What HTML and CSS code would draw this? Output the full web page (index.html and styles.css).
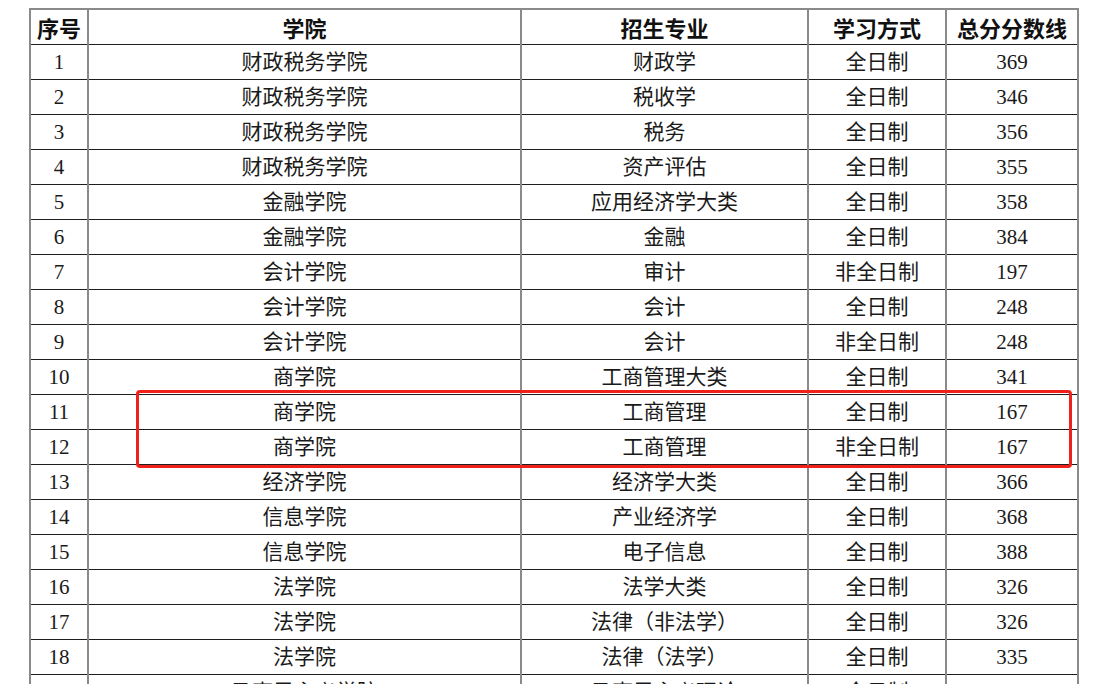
FILE: index.html
```html
<!DOCTYPE html>
<html lang="zh">
<head>
<meta charset="utf-8">
<link rel="stylesheet" href="styles.css">
</head>
<body>
<div class="wrap">
<table class="t">
<colgroup>
<col class="c1"><col class="c2"><col class="c3"><col class="c4"><col class="c5">
</colgroup>
<thead>
<tr><th>序号</th><th>学院</th><th>招生专业</th><th>学习方式</th><th>总分分数线</th></tr>
</thead>
<tbody>
<tr><td>1</td><td>财政税务学院</td><td>财政学</td><td>全日制</td><td>369</td></tr>
<tr><td>2</td><td>财政税务学院</td><td>税收学</td><td>全日制</td><td>346</td></tr>
<tr><td>3</td><td>财政税务学院</td><td>税务</td><td>全日制</td><td>356</td></tr>
<tr><td>4</td><td>财政税务学院</td><td>资产评估</td><td>全日制</td><td>355</td></tr>
<tr><td>5</td><td>金融学院</td><td>应用经济学大类</td><td>全日制</td><td>358</td></tr>
<tr><td>6</td><td>金融学院</td><td>金融</td><td>全日制</td><td>384</td></tr>
<tr><td>7</td><td>会计学院</td><td>审计</td><td>非全日制</td><td>197</td></tr>
<tr><td>8</td><td>会计学院</td><td>会计</td><td>全日制</td><td>248</td></tr>
<tr><td>9</td><td>会计学院</td><td>会计</td><td>非全日制</td><td>248</td></tr>
<tr><td>10</td><td>商学院</td><td>工商管理大类</td><td>全日制</td><td>341</td></tr>
<tr><td>11</td><td>商学院</td><td>工商管理</td><td>全日制</td><td>167</td></tr>
<tr><td>12</td><td>商学院</td><td>工商管理</td><td>非全日制</td><td>167</td></tr>
<tr><td>13</td><td>经济学院</td><td>经济学大类</td><td>全日制</td><td>366</td></tr>
<tr><td>14</td><td>信息学院</td><td>产业经济学</td><td>全日制</td><td>368</td></tr>
<tr><td>15</td><td>信息学院</td><td>电子信息</td><td>全日制</td><td>388</td></tr>
<tr><td>16</td><td>法学院</td><td>法学大类</td><td>全日制</td><td>326</td></tr>
<tr><td>17</td><td>法学院</td><td>法律（非法学）</td><td>全日制</td><td>326</td></tr>
<tr><td>18</td><td>法学院</td><td>法律（法学）</td><td>全日制</td><td>335</td></tr>
<tr><td>19</td><td>马克思主义学院</td><td>马克思主义理论</td><td>全日制</td><td>350</td></tr>
</tbody>
</table>
<div class="mark"></div>
</div>
</body>
</html>
```
FILE: styles.css
```css
html, body {
  margin: 0;
  padding: 0;
  background: #fff;
  overflow: hidden;
}
.wrap {
  position: relative;
  padding: 8px 0 0 29px;
}
.t {
  border-collapse: collapse;
  table-layout: fixed;
  width: 1048px;
  border-top: 2px solid #8a8a8a;
  border-left: 2px solid #8a8a8a;
  border-right: 2px solid #8a8a8a;
  color: #111;
}
.c1 { width: 58px; }
.c2 { width: 433px; }
.c3 { width: 287px; }
.c4 { width: 138px; }
.c5 { width: 132px; }
.t th, .t td {
  height: 34px;
  padding: 0;
  text-align: center;
  vertical-align: middle;
  border-bottom: 1px solid #1e1e1e;
  border-left: 2px solid #8a8a8a;
  white-space: nowrap;
}
.t th {
  font-family: "Noto Sans CJK SC", sans-serif;
  font-weight: 700;
  font-size: 22px;
  line-height: 24px;
  color: #111;
}
.t td {
  font-family: "Liberation Serif", "Noto Sans CJK SC", serif;
  font-weight: 400;
  font-size: 21px;
  line-height: 24px;
  color: #1a1a1a;
}
.mark {
  position: absolute;
  left: 136px;
  top: 390px;
  width: 930px;
  height: 72px;
  border: 3px solid #f0201a;
  border-radius: 4px;
}
```
